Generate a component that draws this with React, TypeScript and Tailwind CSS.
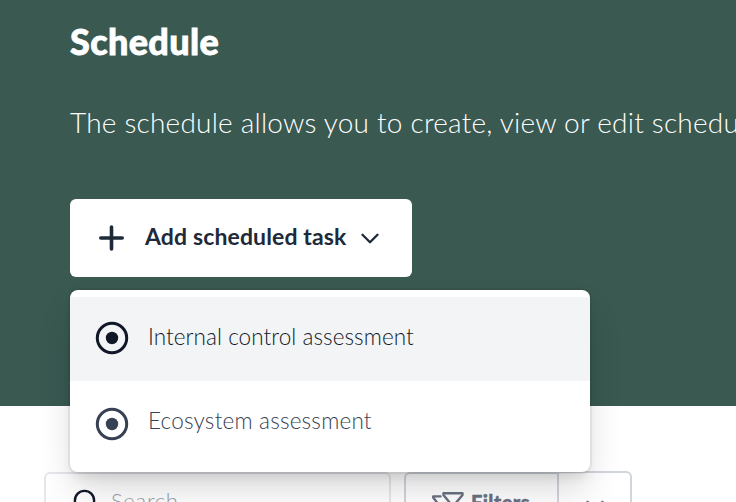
import type { ReactNode } from 'react';

const menuItems = [
	{
		label: 'Internal control assessment',
		rowClass: 'h-[84px] bg-gray-100 text-gray-900',
		iconClass: '-mt-0.5',
		labelClass: 'tracking-[0.06px]',
	},
	{
		label: 'Ecosystem assessment',
		rowClass: 'h-[84px] bg-white text-gray-700',
		iconClass: 'mt-0.5',
		labelClass: 'tracking-[0.2px]',
	},
];

const PlusIcon = () => (
	<svg width="26" height="26" viewBox="0 0 26 26" fill="none">
		<path
			d="M12.5 2V24M1.8 13H23.2"
			stroke="currentColor"
			strokeWidth="3.6"
			strokeLinecap="round"
		/>
	</svg>
);

const ChevronIcon = () => (
	<svg width="18" height="12" viewBox="0 0 18 12" fill="none">
		<path
			d="M1.5 1.8L9 9.3L16.5 1.8"
			stroke="currentColor"
			strokeWidth="2.3"
			strokeLinecap="round"
			strokeLinejoin="round"
		/>
	</svg>
);

const TargetIcon = () => (
	<svg width="34" height="34" viewBox="0 0 34 34" fill="none">
		<circle cx="17" cy="17" r="14.7" stroke="currentColor" strokeWidth="3" />
		<circle cx="17" cy="17" r="6.2" fill="currentColor" />
	</svg>
);

const SearchIcon = () => (
	<svg width="26" height="26" viewBox="0 0 26 26" fill="none">
		<circle cx="11.5" cy="11.5" r="9.6" stroke="currentColor" strokeWidth="2.4" />
		<path
			d="M18.5 18.5L24 24"
			stroke="currentColor"
			strokeWidth="2.4"
			strokeLinecap="round"
		/>
	</svg>
);

const FilterIcon = () => (
	<svg width="34" height="26" viewBox="0 0 34 26" fill="none">
		<g
			stroke="currentColor"
			strokeWidth="2.4"
			strokeLinecap="round"
			strokeLinejoin="round"
		>
			<path d="M12.5 2.2H31.5V4L24.8 12V22L19 18V12L12.5 4Z" />
			<path d="M9.5 5.4H2.2V6.6L8 14V20" />
		</g>
	</svg>
);

const MenuItem = ({
	label,
	rowClass,
	iconClass,
	labelClass,
}: {
	label: string;
	rowClass: string;
	iconClass: string;
	labelClass: string;
}) => (
	<button className={`flex w-full items-center pl-[25px] ${rowClass}`}>
		<span className={iconClass}>
			<TargetIcon />
		</span>
		<span
			className={`ml-[19px] pb-[5px] text-[22.5px] font-light ${labelClass}`}
		>
			{label}
		</span>
	</button>
);

const Header = ({ children }: { children: ReactNode }) => (
	<header className="h-[406px] bg-[#395951] pl-[70px] pt-[20px] text-white">
		{children}
	</header>
);

export default function App() {
	return (
		<div className="h-[502px] w-[736px] overflow-hidden whitespace-nowrap bg-white font-['Lato','Liberation_Sans',sans-serif]">
			<Header>
				<h1 className="text-[36px] leading-[42px] font-black tracking-[0.35px] [-webkit-text-stroke:0.8px_white]">
					Schedule
				</h1>
				<p className="mt-[43px] text-[28px] leading-[34px] font-light tracking-[0.22px]">
					The schedule allows you to create, view or edit scheduled tasks
				</p>

				<div className="relative mt-[60px] w-[520px]">
					<button className="flex h-[78px] w-[342px] items-center rounded-md bg-white pl-[29px] text-gray-800">
						<PlusIcon />
						<span className="ml-[20px] w-[202px] pb-[5px] text-left text-[23px] leading-[30px] font-bold tracking-[0.13px]">
							Add scheduled task
						</span>
						<span className="ml-[14px] mt-0.5">
							<ChevronIcon />
						</span>
					</button>

					<div className="absolute top-[91px] left-0 z-10 h-[182px] w-[520px] overflow-hidden rounded-lg bg-white pt-[7px] shadow-[0_0_0_2px_rgba(0,0,0,0.05),0_20px_36px_-4px_rgba(0,0,0,0.16),0_8px_12px_-4px_rgba(0,0,0,0.1)]">
						{menuItems.map((item) => (
							<MenuItem key={item.label} {...item} />
						))}
					</div>
				</div>
			</Header>

			<div className="flex pt-[65px] pl-[44px]">
				<div className="mt-px flex h-[60px] w-[347px] items-center rounded-md border-2 border-gray-200 pl-[27px] text-gray-900">
					<SearchIcon />
					<span className="ml-[12px] pb-[3px] text-[22px] font-light tracking-[0.7px] text-gray-400">
						Search
					</span>
				</div>
				<button className="ml-[13px] mt-px flex h-[60px] w-[153px] items-center rounded-l-md border-2 border-r-0 border-gray-300 pl-[25px] text-gray-500">
					<span className="pt-1">
						<FilterIcon />
					</span>
					<span className="ml-[6px] pb-px text-[20px] font-black tracking-[0.4px] [-webkit-text-stroke:0.4px]">
						Filters
					</span>
				</button>
				<button className="flex h-[62px] w-[75px] items-center justify-center rounded-r-md border-2 border-gray-300 pt-[7px] text-gray-500">
					<ChevronIcon />
				</button>
			</div>
		</div>
	);
}
